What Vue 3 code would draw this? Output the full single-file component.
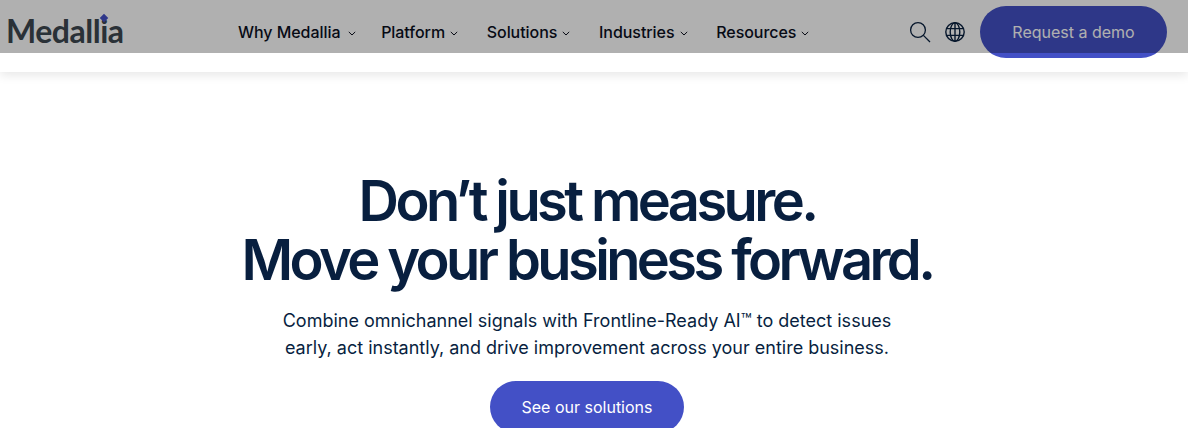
<template>
  <div class="page">
    <header class="site-header">
      <div class="header-row">
        <a class="logo">
          Medallia
          <span class="logo-dot"></span>
        </a>
        <nav class="main-nav">
          <a v-for="item in navItems" :key="item" class="nav-item">
            {{ item }}
            <svg class="chevron" width="8" height="5" viewBox="0 0 8 5" fill="none">
              <path d="M0.8 0.9 L4 4 L7.2 0.9" stroke="currentColor" stroke-width="1" />
            </svg>
          </a>
        </nav>
        <div class="header-actions">
          <svg class="icon" width="22" height="22" viewBox="0 0 22 22" fill="none" stroke="#0b2240" stroke-width="1.3">
            <circle cx="9" cy="9" r="7.4" />
            <path d="M14.4 14.4 L21 21" />
          </svg>
          <svg class="icon" width="20" height="20" viewBox="0 0 20 20" fill="none" stroke="#0b2240" stroke-width="1.4">
            <circle cx="10" cy="10" r="9.2" />
            <ellipse cx="10" cy="10" rx="4.8" ry="9.2" />
            <path d="M10 0.8 V19.2 M1.6 6.6 H18.4 M1.6 13.4 H18.4" />
          </svg>
          <button class="demo-btn">Request a demo</button>
        </div>
      </div>
    </header>

    <section class="hero">
      <h1>Don’t just measure.<br />Move your business forward.</h1>
      <p>Combine omnichannel signals with Frontline-Ready AI™ to detect issues<br />early, act instantly, and drive improvement across your entire business.</p>
      <button class="cta">See our solutions</button>
    </section>

    <div class="top-overlay"></div>
  </div>
</template>

<script setup>
const navItems = ['Why Medallia', 'Platform', 'Solutions', 'Industries', 'Resources']
</script>

<style scoped>
.page { position: relative; font-family: Inter, sans-serif; color: #081f3f; background: #fff; }
.site-header {
  height: 72px;
  box-shadow: 0 3px 10px rgba(0, 0, 0, 0.1);
}
.header-row {
  display: flex;
  align-items: center;
  height: 64px;
  padding: 0 21px 0 6px;
}
.logo {
  position: relative;
  width: 232px;
  margin-bottom: 4px;
  font-family: Lato, sans-serif;
  font-size: 32px;
  font-weight: 700;
  letter-spacing: -0.5px;
  color: #3d4850;
}
.logo-dot {
  position: absolute;
  left: 95px;
  top: 4px;
  width: 6px;
  height: 6px;
  background: #4450c8;
  transform: rotate(45deg);
}
.main-nav { display: flex; gap: 28.7px; }
.nav-item {
  display: flex;
  align-items: center;
  gap: 5px;
  font-size: 16px;
  font-weight: 500;
  letter-spacing: -0.05px;
  color: #0b0f1e;
}
.nav-item:first-child { gap: 8px; margin-right: -4px; }
.chevron { margin-top: 2px; }
.header-actions {
  display: flex;
  align-items: center;
  margin-left: auto;
  gap: 14px;
}
.demo-btn {
  width: 187px;
  height: 52px;
  margin-left: 1px;
  border: none;
  border-radius: 26px;
  background: #4350c6;
  color: #fff;
  font-family: inherit;
  font-size: 16px;
}
.hero {
  display: flex;
  flex-direction: column;
  align-items: center;
  padding: 100px 14px 0 0;
  text-align: center;
}
h1 {
  margin: 0;
  font-size: 56px;
  line-height: 59px;
  font-weight: 600;
  letter-spacing: -3.6px;
  color: #081f3f;
}
p {
  margin: 17px 0 0;
  font-size: 18px;
  line-height: 27px;
  color: #081f3f;
}
.cta {
  width: 194px;
  height: 52px;
  margin-top: 20px;
  border: none;
  border-radius: 26px;
  background: #4350c6;
  color: #fff;
  font-family: inherit;
  font-size: 16px;
}
.top-overlay {
  position: absolute;
  top: 0;
  left: 0;
  right: 0;
  height: 53px;
  background: rgba(0, 0, 0, 0.31);
}
</style>

<style>
html, body { overflow: hidden; }
</style>
